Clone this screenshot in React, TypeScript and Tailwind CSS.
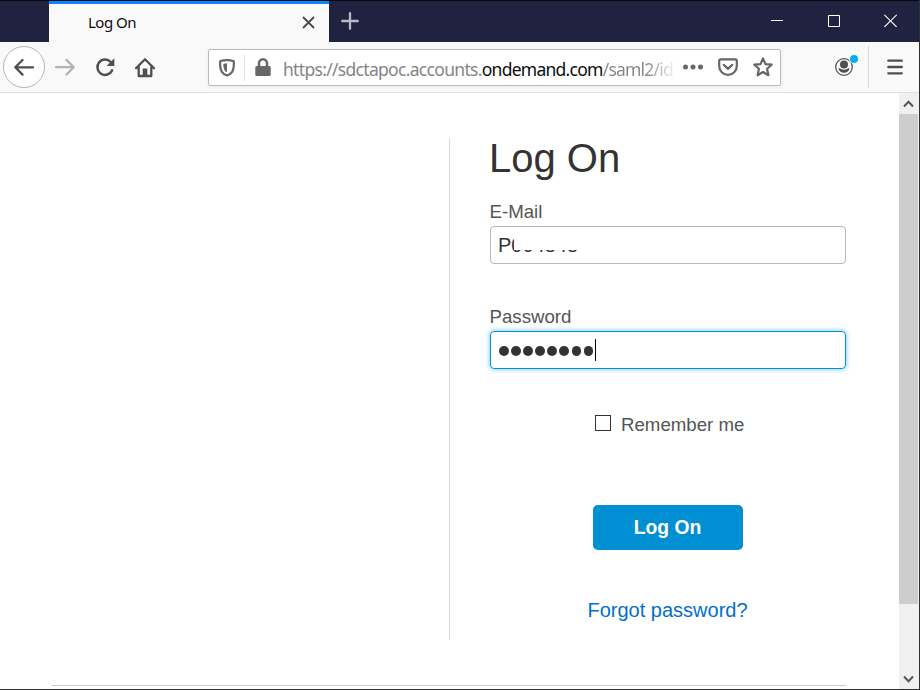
import React from "react";

function TabBar() {
  return (
    <header className="flex h-[42px] shrink-0 border-t border-[#08080f] bg-[#20233f]">
      <div className="flex w-[280px] ml-[49px] border-t-[3px] border-[#0a84ff] bg-[#f9f9fa] pl-[39px] pr-[14px]">
        <span className="mt-[7px] flex-1 text-[15px] leading-[22px] tracking-[-0.5px] text-[#0c0c0d]">Log On</span>
        <svg className="mt-[12px]" width="13" height="13" viewBox="0 0 13 13" fill="none" stroke="#4a4a4c" strokeWidth="1.8">
          <path d="M1 1l11 11M12 1L1 12" />
        </svg>
      </div>
      <svg className="ml-[12px] mt-[11px]" width="18" height="18" viewBox="0 0 18 18" fill="none" stroke="#b9bac5" strokeWidth="2.3" strokeLinecap="round">
        <path d="M9 1.200v15.600M1.200 9h15.600" />
      </svg>
      <div className="ml-auto mr-[22px] mt-[13px] flex">
        <svg className="mr-[44px]" width="12" height="13" viewBox="0 0 12 13" fill="none" stroke="#ffffff">
          <path d="M0 6.500h12" />
        </svg>
        <svg className="mr-[44px]" width="13" height="14" viewBox="0 0 13 14" fill="none" stroke="#ffffff">
          <path d="M1.500 1.500h11v11h-11z" />
        </svg>
        <svg width="13" height="13" viewBox="0 0 13 13" fill="none" stroke="#ffffff" strokeWidth="1.1">
          <path d="M.3.8l12.400 12.200M12.700.8L.3 13" />
        </svg>
      </div>
    </header>
  );
}

function AddressBar() {
  return (
    <div className="ml-[52px] mt-[7px] flex h-[37px] w-[573px] items-center rounded-[2px] border border-[#b9b9ba] bg-white shadow-[0_1px_4px_rgba(0,0,0,0.06)]">
      <svg className="ml-[9px] shrink-0" width="18" height="18" viewBox="0 0 18 18">
        <path d="M9 1.200C6.500 1.200 4.200 1.500 2.200 2.200c-.3 5 .1 8 1.700 10.700 1.300 2 3 3 5.100 3.600 2.100-.6 3.800-1.600 5.100-3.600 1.600-2.700 2-5.700 1.700-10.700-2-.7-4.300-1-6.800-1z" fill="none" stroke="#676768" strokeWidth="2.200" strokeLinejoin="round" />
        <path d="M9 4.300v9c-2.700-1.200-3.700-3.800-3.700-8.400 1.200-.4 2.400-.6 3.700-.6z" fill="#676768" />
      </svg>
      <div className="ml-[8px] h-[26px] w-px shrink-0 bg-[#dededf]" />
      <svg className="-mt-[2px] ml-[10px] shrink-0" width="16" height="18" viewBox="0 0 16 18">
        <path d="M4 9V5.300a4 4 0 0 1 8 0V9" fill="none" stroke="#676768" strokeWidth="2.500" />
        <rect x="0.300" y="8" width="15.400" height="10" rx="1.500" fill="#676768" />
      </svg>
      <div className="ml-[12px] w-[391px] shrink-0 pt-[2px]">
        <div className="whitespace-nowrap font-['Noto_Sans','Open_Sans',sans-serif] text-[17.500px] leading-[28px] tracking-[-0.690px] text-[#858586]">
          https://sdctapoc.accounts.<span className="text-[#0c0c0d] tracking-[-0.740px]">ondemand.com</span>
          <span className="bg-[linear-gradient(to_right,#858586_60%,#ececec)] bg-clip-text tracking-[-0.800px] text-transparent">/saml2/id</span>
        </div>
      </div>
      <svg className="-mt-px ml-[9px] shrink-0" width="20" height="6" viewBox="0 0 20 6" fill="#666667">
        <circle cx="2.500" cy="3" r="2.500" />
        <circle cx="10" cy="3" r="2.500" />
        <circle cx="17.500" cy="3" r="2.500" />
      </svg>
      <svg className="-mt-[2px] ml-[15px] shrink-0" width="20" height="18" viewBox="0 0 20 18" fill="none" stroke="#666667" strokeWidth="2.200" strokeLinecap="round" strokeLinejoin="round">
        <path d="M2.500 1.400h15a1.300 1.300 0 0 1 1.300 1.300V8a8.800 8.800 0 0 1-17.600 0V2.700a1.300 1.300 0 0 1 1.300-1.300z" />
        <path d="M5.700 6.800L10 10.900l4.300-4.100" />
      </svg>
      <svg className="-mt-px ml-[15px] shrink-0" width="20" height="20" viewBox="0 0 20 20" fill="none" stroke="#666667" strokeWidth="2.200" strokeLinejoin="round">
        <path d="M10 1.400l2.500 5.700 6.200.6-4.600 4.100 1.300 6.400-5.400-3.200-5.400 3.200 1.300-6.400-4.600-4.100 6.200-.6z" />
      </svg>
    </div>
  );
}

function Toolbar() {
  return (
    <nav className="flex h-[51px] shrink-0 border-b border-[#dfdfe0] bg-[#f9f9fa]">
      <div className="ml-[3px] mt-[4px] flex size-[42px] shrink-0 items-center justify-center rounded-full border border-[#b5b5b6] bg-white">
        <svg width="20" height="18" viewBox="0 0 20 18" fill="none" stroke="#4f4f50" strokeWidth="2.300" strokeLinecap="round" strokeLinejoin="round">
          <path d="M19 9.300H1.500M8.500 2L1.300 9.300l7.200 7.300" />
        </svg>
      </div>
      <svg className="ml-[10px] mt-[16px] shrink-0" width="20" height="18" viewBox="0 0 20 18" fill="none" stroke="#b3b3b4" strokeWidth="2.300" strokeLinecap="round" strokeLinejoin="round">
        <path d="M1 9.200h17.500M11.500 1.900l7.200 7.300-7.200 7.300" />
      </svg>
      <svg className="ml-[20px] mt-[15px] shrink-0" width="20" height="20" viewBox="0.700 0 20 20" fill="none" stroke="#4f4f50" strokeWidth="2.500" strokeLinecap="round">
        <path d="M17.800 13.400A7.700 7.700 0 1 1 16.500 5" />
        <path d="M20 1.200v7.700h-7.700z" fill="#4f4f50" stroke="none" />
      </svg>
      <svg className="ml-[19px] mt-[15px] shrink-0" width="22" height="21" viewBox="0 0 22 21" fill="none" stroke="#4f4f50" strokeWidth="2.300" strokeLinecap="round" strokeLinejoin="round">
        <path d="M2 11.200L11 2.200l9 9M4.700 10v9h12.600V10" />
        <path d="M8.700 18.500v-7h4.600v7z" fill="#4f4f50" stroke="none" />
      </svg>
      <AddressBar />
      <svg className="ml-[53px] mt-[12px] shrink-0" width="25" height="23" viewBox="0 0 25 23">
        <circle cx="10" cy="13" r="8.300" fill="none" stroke="#555556" strokeWidth="1.300" />
        <circle cx="10" cy="10.600" r="4" fill="#4f4f50" />
        <path d="M4.500 14.500c1.500-.8 2.500 1.200 5.500 1.200s4-2 5.500-1.200c-.3 2.500-2.600 4.200-5.500 4.200s-5.200-1.700-5.500-4.200z" fill="#4f4f50" />
        <circle cx="20" cy="5" r="5" fill="#f9f9fa" />
        <circle cx="20" cy="5" r="4" fill="#00adf8" />
      </svg>
      <div className="ml-[9px] mt-[4px] h-[42px] w-px bg-[#dadadb]" />
      <svg className="ml-[18px] mt-[17px] shrink-0" width="16" height="16" viewBox="0 0 16 16" stroke="#4f4f50" strokeWidth="2.300" strokeLinecap="round">
        <path d="M1.300 1.700h13.500M1.300 8h13.500M1.300 14.300h13.500" />
      </svg>
    </nav>
  );
}

function LogOnForm() {
  return (
    <form className="flex w-[397px] flex-col border-l border-[#d9d9d9] pl-[40px] text-[18.670px] text-[#555]">
      <h1 className="-ml-px mt-[-3px] text-[40px] leading-[46px] text-[#333]">Log On</h1>
      <label className="-ml-[0.500px] mt-[20px] leading-[21px]">E-Mail</label>
      <div className="relative mt-[4px] h-[38px] rounded-[4px] border border-[#b8b8b8] pl-[7px] text-[20px] leading-[37px] text-[#333]">
        P004848
        <span className="absolute left-[23px] top-[5px] h-[18px] w-[70px] bg-white" />
      </div>
      <label className="-ml-[0.500px] mt-[42px] leading-[21px]">Password</label>
      <div className="mt-[4px] flex h-[38px] items-center rounded-[4px] border border-[#0092d8] pl-[8px] shadow-[0_0_5px_rgba(0,150,225,0.6)]">
        <div className="flex gap-[2.600px] pt-[2px]">
          {Array.from({ length: 8 }, (_, i) => (
            <span key={i} className="size-[9.500px] rounded-full bg-[#333]" />
          ))}
        </div>
        <span className="ml-[1.500px] h-[22px] w-px bg-black" />
      </div>
      <div className="mt-[45px] flex items-center pl-[105px]">
        <span className="mb-[4px] size-[16px] border border-[#333]" />
        <span className="ml-[10px] leading-[21px]">Remember me</span>
      </div>
      <button type="button" className="ml-[103px] mt-[70px] h-[45px] w-[150px] rounded-[5px] bg-[#008fd3] pr-px pt-px text-[19.300px] font-bold text-white">Log On</button>
      <a className="ml-[97.500px] mt-[49px] text-[20px] leading-[23px] text-[#0070ca]">Forgot password?</a>
    </form>
  );
}

function Scrollbar() {
  return (
    <aside className="flex w-[20px] flex-col bg-[#f0f0f0]">
      <svg className="ml-[4px] mt-[7px]" width="11" height="8" viewBox="0 0 11 8" fill="none" stroke="#555" strokeWidth="2">
        <path d="M1 6.500l4.500-4.700L10 6.500" />
      </svg>
      <div className="mr-px mt-[6px] h-[490px] bg-[#cdcdcd]" />
      <svg className="mb-[6px] ml-[4px] mt-auto" width="11" height="8" viewBox="0 0 11 8" fill="none" stroke="#555" strokeWidth="2">
        <path d="M1 1.500l4.500 4.700L10 1.500" />
      </svg>
    </aside>
  );
}

export default function App() {
  return (
    <div className="flex h-[690px] w-[920px] flex-col overflow-hidden border-b border-r border-[#303030] bg-white font-['Noto_Sans','Open_Sans',sans-serif]">
      <TabBar />
      <Toolbar />
      <main className="flex min-h-0 flex-1">
        <div className="flex flex-1 flex-col font-['Liberation_Sans',Arial,sans-serif]">
          <div className="ml-[449px] mt-[45px] flex h-[502px]">
            <LogOnForm />
          </div>
          <hr className="ml-[52px] mt-[45px] w-[794px] border-[#c9c9c9]" />
        </div>
        <Scrollbar />
      </main>
    </div>
  );
}
